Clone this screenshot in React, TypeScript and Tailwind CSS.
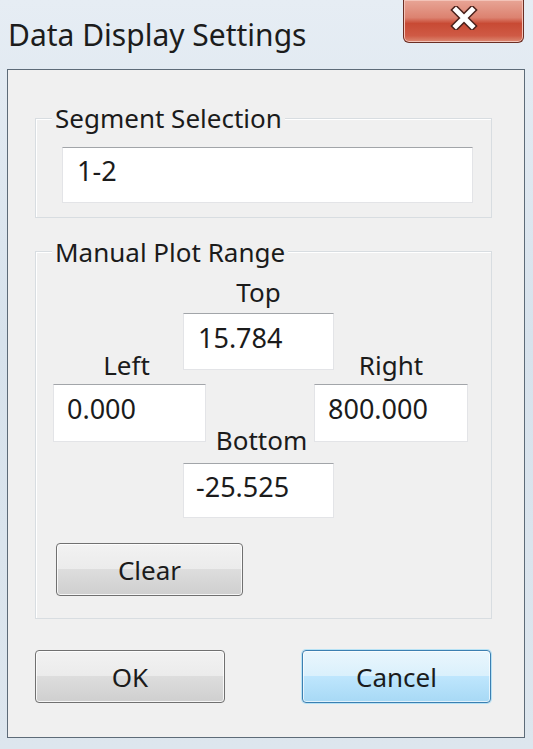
import React from "react";

function Field({ value, className }: { value: string; className: string }) {
  return (
    <div
      className={
        "bg-white border border-[#e3e4e7] border-t-[#a2a5a9] text-[27px] leading-[30px] text-[#1b1b1b] whitespace-nowrap " +
        className
      }
    >
      {value}
    </div>
  );
}

function WinButton({ label, className, hot }: { label: string; className: string; hot?: boolean }) {
  return (
    <div
      className={
        "flex items-center justify-center rounded-[4px] text-[26px] leading-[30px] text-[#1b1b1b] " +
        (hot
          ? "border border-[#3c7fb1] bg-[linear-gradient(180deg,#eaf6fd_0%,#d9f0fc_50%,#bee6fd_50%,#a7d9f5_100%)] shadow-[inset_0_0_0_1px_#ffffffaa,0_0_0_1px_#b7e2f5] "
          : "border border-[#707070] bg-[linear-gradient(180deg,#f2f2f2_0%,#ebebeb_50%,#dddddd_50%,#cfcfcf_100%)] shadow-[inset_0_0_0_1px_#ffffffcc] ") +
        className
      }
    >
      {label}
    </div>
  );
}

export default function App() {
  return (
    <div className="w-[533px] h-[749px] overflow-hidden flex flex-col bg-[linear-gradient(180deg,#e6edf4_0%,#d7e2ec_45%,#dde6ee_100%)] font-['Noto_Sans',sans-serif] text-[#1b1b1b]">
      {/* Title bar */}
      <div className="h-[69px] shrink-0 flex items-start">
        <div className="mt-[18px] ml-[8px] text-[30px] leading-[34px] text-[#1c1c1c] whitespace-nowrap">
          Data Display Settings
        </div>
        <div className="ml-auto mr-[9px] w-[121px] h-[43px] flex justify-center pt-[6px] rounded-b-[6px] border border-t-0 border-[#6b2e24] bg-[linear-gradient(180deg,#e8a596_0%,#dc8270_42%,#c84a34_56%,#cf5a45_85%,#dc8a74_100%)] shadow-[inset_0_0_0_1px_#f3c3b8]">
          <svg width="32" height="24" viewBox="0 0 32 24">
            <path d="M8 4 L24 20 M24 4 L8 20" stroke="#4a211b" strokeWidth="8" strokeLinecap="square" fill="none" />
            <path d="M8 4 L24 20 M24 4 L8 20" stroke="#ffffff" strokeWidth="5" strokeLinecap="square" fill="none" />
          </svg>
        </div>
      </div>

      {/* Client frame */}
      <div className="ml-[7px] mr-[8px] h-[669px] shrink-0 border border-[#5d6b78] bg-[#f0f0f0] flex flex-col">
        {/* Segment Selection group */}
        <div className="mt-[48px] ml-[27px] w-[457px] border border-[#d8dde1] shadow-[inset_1px_1px_0_#ffffff] pb-[14px]">
          <div className="-mt-[16px] ml-[16px] w-fit px-[3px] bg-[#f0f0f0] text-[26px] leading-[30px] whitespace-nowrap">
            Segment Selection
          </div>
          <Field value="1-2" className="mt-[14px] ml-[26px] w-[411px] h-[56px] pl-[14px] pt-[8px]" />
        </div>

        {/* Manual Plot Range group */}
        <div className="mt-[33px] ml-[27px] w-[457px] border border-[#d8dde1] shadow-[inset_1px_1px_0_#ffffff] pb-[22px]">
          <div className="-mt-[15px] ml-[16px] w-fit px-[3px] bg-[#f0f0f0] text-[26px] leading-[30px] whitespace-nowrap">
            Manual Plot Range
          </div>
          <div className="flex items-start">
            <div className="ml-[17px] w-[153px] mt-[83px] flex flex-col">
              <div className="text-center pr-[6px] text-[26px] leading-[30px]">Left</div>
              <Field value="0.000" className="mt-[4px] h-[58px] pl-[13px] pt-[9px]" />
            </div>
            <div className="-ml-[23px] w-[151px] mt-[10px] flex flex-col">
              <div className="text-center text-[26px] leading-[30px]">Top</div>
              <Field value="15.784" className="mt-[6px] h-[57px] pl-[14px] pt-[9px]" />
              <div className="mt-[55px] text-center pl-[6px] text-[26px] leading-[30px]">Bottom</div>
              <Field value="-25.525" className="mt-[8px] h-[55px] pl-[12px] pt-[8px]" />
            </div>
            <div className="-ml-[20px] w-[154px] mt-[83px] flex flex-col">
              <div className="text-center text-[26px] leading-[30px]">Right</div>
              <Field value="800.000" className="mt-[4px] h-[58px] pl-[13px] pt-[9px]" />
            </div>
          </div>
          <WinButton label="Clear" className="mt-[25px] ml-[20px] w-[187px] h-[53px]" />
        </div>

        {/* Dialog buttons */}
        <div className="mt-[31px] flex">
          <WinButton label="OK" className="ml-[27px] w-[190px] h-[53px]" />
          <WinButton label="Cancel" hot className="ml-[77px] w-[189px] h-[53px]" />
        </div>
      </div>
    </div>
  );
}
